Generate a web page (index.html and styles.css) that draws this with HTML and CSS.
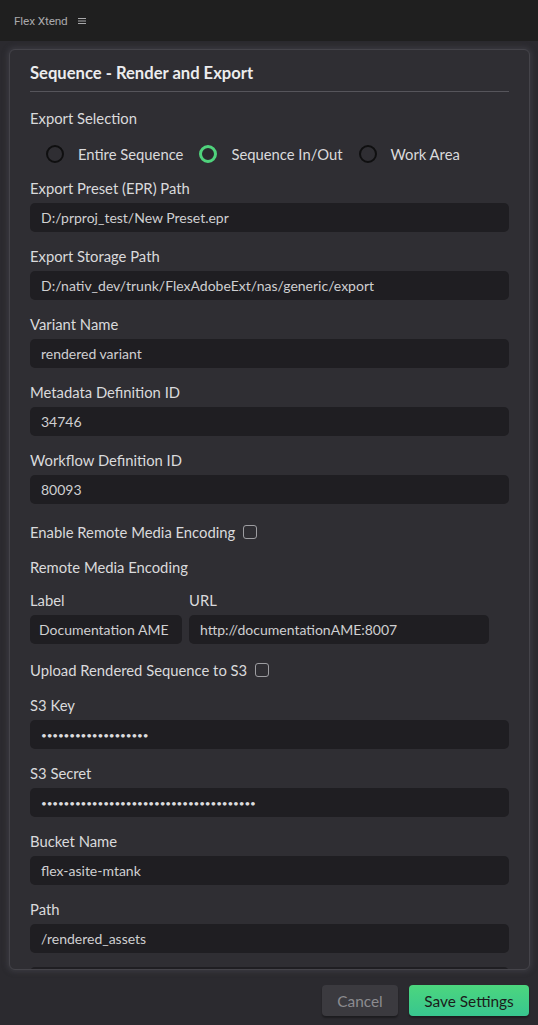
FILE: index.html
```html
<!DOCTYPE html>
<html>
<head>
<meta charset="utf-8">
<link rel="stylesheet" href="styles.css">
</head>
<body>
<div class="app">
  <header class="topbar">
    <span class="app-name">Flex Xtend</span>
    <span class="menu-icon" aria-hidden="true">
      <svg width="8" height="8" viewBox="0 0 8 8"><path d="M0 1.5H8M0 4H8M0 6.5H8" stroke="#a9a9ab" stroke-width="1.2"/></svg>
    </span>
  </header>

  <main class="main">
    <section class="card">
      <h1 class="card-title">Sequence - Render and Export</h1>
      <div class="divider"></div>

      <div class="section-label">Export Selection</div>
      <div class="radio-row">
        <label class="radio"><span class="dot"></span><span>Entire Sequence</span></label>
        <label class="radio"><span class="dot checked"></span><span>Sequence In/Out</span></label>
        <label class="radio"><span class="dot"></span><span>Work Area</span></label>
      </div>

      <div class="fields first">
        <div class="field">
          <div class="label">Export Preset (EPR) Path</div>
          <div class="input">D:/prproj_test/New Preset.epr</div>
        </div>
        <div class="field">
          <div class="label">Export Storage Path</div>
          <div class="input">D:/nativ_dev/trunk/FlexAdobeExt/nas/generic/export</div>
        </div>
        <div class="field">
          <div class="label">Variant Name</div>
          <div class="input">rendered variant</div>
        </div>
        <div class="field">
          <div class="label">Metadata Definition ID</div>
          <div class="input">34746</div>
        </div>
        <div class="field">
          <div class="label">Workflow Definition ID</div>
          <div class="input">80093</div>
        </div>
      </div>

      <div class="check-row rme"><span>Enable Remote Media Encoding</span><span class="checkbox"></span></div>
      <div class="section-label rme-title">Remote Media Encoding</div>
      <div class="sub-fields">
        <div class="field sub-label">
          <div class="label">Label</div>
          <div class="input compact">Documentation AME</div>
        </div>
        <div class="field sub-url">
          <div class="label">URL</div>
          <div class="input">http://documentationAME:8007</div>
        </div>
      </div>
      <div class="check-row s3"><span>Upload Rendered Sequence to S3</span><span class="checkbox"></span></div>

      <div class="fields s3-fields">
        <div class="field">
          <div class="label">S3 Key</div>
          <div class="input secret">•••••••••••••••••••</div>
        </div>
        <div class="field">
          <div class="label">S3 Secret</div>
          <div class="input secret">••••••••••••••••••••••••••••••••••••••</div>
        </div>
        <div class="field">
          <div class="label">Bucket Name</div>
          <div class="input">flex-asite-mtank</div>
        </div>
        <div class="field">
          <div class="label">Path</div>
          <div class="input">/rendered_assets</div>
        </div>
        <div class="input"></div>
      </div>
    </section>
  </main>

  <footer class="footer">
    <button class="btn cancel">Cancel</button>
    <button class="btn save">Save Settings</button>
  </footer>
</div>
</body>
</html>
```

FILE: styles.css
```css
* { box-sizing: border-box; }

html, body {
  margin: 0;
  padding: 0;
  background: #2b2a2f;
}

body {
  font-family: Lato, "Open Sans", sans-serif;
  font-size: 14.8px;
  color: #dadadc;
}

.app {
  display: flex;
  flex-direction: column;
  height: 1025px;
  overflow: hidden;
}

.topbar {
  height: 41px;
  flex: none;
  background: #1f1f1f;
  display: flex;
  align-items: center;
  padding-left: 14px;
  gap: 10px;
}

.app-name {
  font-family: Roboto, sans-serif;
  font-size: 11.8px;
  color: #a9a9ab;
  letter-spacing: -0.15px;
}

.menu-icon { display: flex; align-items: center; }

.main {
  flex: none;
  padding: 8px 8px 0 9px;
}

.card {
  height: 921px;
  background: #2f2e33;
  border: 1px solid #45444a;
  border-radius: 6px;
  box-shadow: 0 0 5px 2px rgba(70, 70, 76, 0.55);
  padding: 0 20px;
  overflow: hidden;
}

.card-title {
  margin: 11px 0 0;
  font-size: 16.6px;
  line-height: 24px;
  font-weight: 700;
  color: #ececee;
}

.divider {
  margin-top: 6px;
  height: 1px;
  background: #56555b;
}

.section-label {
  margin-top: 16px;
  line-height: 20px;
}

.label { line-height: 20px; }

.radio-row {
  margin-top: 15px;
  height: 22px;
  display: flex;
  align-items: center;
  padding-left: 16px;
  gap: 16px;
}

.radio {
  display: flex;
  align-items: center;
  gap: 14px;
}

.dot {
  width: 18px;
  height: 18px;
  border-radius: 50%;
  border: 2px solid #0f0f10;
}

.dot.checked {
  border: 3px solid #4fd27c;
  background: #2a292e;
}

.fields {
  display: flex;
  flex-direction: column;
  gap: 14px;
}

.fields.first { margin-top: 13px; }

.field {
  display: flex;
  flex-direction: column;
  gap: 5px;
}

.input {
  height: 29px;
  flex: none;
  background: #1f1e22;
  border-radius: 5px;
  padding-left: 11px;
  display: flex;
  align-items: center;
  color: #cfcfd1;
  font-size: 14px;
  white-space: nowrap;
}

.input.compact { padding-left: 9px; }

.input.secret {
  font-size: 10px;
  letter-spacing: -0.15px;
  padding-left: 11px;
  color: #dcdcde;
}

.check-row {
  line-height: 20px;
  display: flex;
  align-items: center;
  gap: 8px;
}

.check-row.rme { margin-top: 18px; }
.check-row.s3 { margin-top: 16px; }

.checkbox {
  width: 14px;
  height: 14px;
  border: 1.5px solid #9d9da1;
  border-radius: 3px;
}

.section-label.rme-title { margin-top: 15px; }

.sub-fields {
  margin-top: 13px;
  display: flex;
  gap: 7px;
}

.sub-label { width: 152px; }
.sub-url { width: 300px; }

.s3-fields { margin-top: 15px; }

.footer {
  flex: none;
  display: flex;
  justify-content: flex-end;
  gap: 11px;
  padding: 15px 9px 0 0;
}

.btn {
  height: 31px;
  border: none;
  border-radius: 4px;
  font-family: Lato, "Open Sans", sans-serif;
  font-size: 15.4px;
  box-shadow: 0 2px 2px rgba(0, 0, 0, 0.35);
}

.btn.cancel {
  width: 76px;
  background: #3b3a3f;
  color: #8c8c90;
}

.btn.save {
  width: 120px;
  background: linear-gradient(180deg, #4cd67e 0%, #38c68f 100%);
  color: #1b1b1b;
}
```
